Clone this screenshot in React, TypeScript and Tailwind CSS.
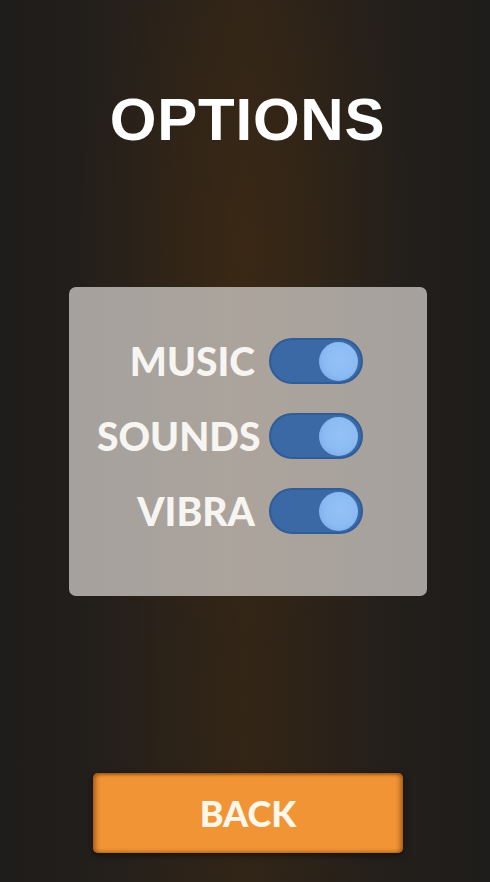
import React from "react";

function Toggle() {
  return (
    <div className="flex h-[46px] w-[94px] items-center justify-end rounded-full border-2 border-[#305d97] bg-[#3a69a6] pr-[3px]">
      <div className="h-[39px] w-[39px] rounded-full bg-[radial-gradient(circle_at_55%_45%,#94c2f7_0%,#8cbbf3_55%,#6fa3e3_100%)]" />
    </div>
  );
}

export default function App() {
  const rows = ["MUSIC", "SOUNDS", "VIBRA"];
  return (
    <div className="relative flex h-[882px] w-[490px] flex-col items-center overflow-hidden bg-[linear-gradient(90deg,#1f1d1b_0%,#211e1b_15%,#29211a_33%,#2f2419_50%,#29211a_67%,#211e1b_85%,#1f1d1b_100%)] [font-family:Lato,'Open_Sans',sans-serif]">
      <div className="pointer-events-none absolute inset-0 bg-[radial-gradient(ellipse_34%_45%_at_50%_28%,rgba(70,45,15,0.45)_0%,rgba(70,45,15,0.18)_55%,rgba(70,45,15,0)_100%)]" />
      <div className="pointer-events-none absolute inset-0 bg-[radial-gradient(ellipse_28%_40%_at_50%_80%,rgba(60,40,15,0.3)_0%,rgba(60,40,15,0)_100%)]" />
      <h1 className="relative ml-[5px] pt-[90px] text-[60px] font-bold leading-[60px] tracking-[0.8px] text-white [font-family:'Liberation_Sans',Arial,sans-serif]">
        OPTIONS
      </h1>
      <div className="relative ml-[6px] mt-[137px] h-[309px] w-[358px] rounded-[7px] bg-[linear-gradient(90deg,#a5a19e_0%,#aca49c_50%,#a5a19e_100%)] pl-[28px] pt-[51px]">
        <div className="grid grid-cols-[158px_94px] items-center gap-x-[14px] gap-y-[29px]">
          {rows.map((r) => (
            <React.Fragment key={r}>
              <span className="text-right text-[39px] font-black leading-[46px] text-[#f7f5f1]">
                {r}
              </span>
              <Toggle />
            </React.Fragment>
          ))}
        </div>
      </div>
      <div className="relative ml-[6px] mt-[177px] flex h-[80px] w-[310px] items-center justify-center rounded-[5px] bg-[#f09435] shadow-[inset_3px_0_4px_rgba(120,60,10,0.55),inset_-3px_0_4px_rgba(120,60,10,0.55),inset_0_2px_2px_rgba(150,80,20,0.4),0_2px_6px_rgba(0,0,0,0.5)]">
        <span className="text-[36px] font-black leading-none text-[#fff7ea]">BACK</span>
      </div>
    </div>
  );
}
